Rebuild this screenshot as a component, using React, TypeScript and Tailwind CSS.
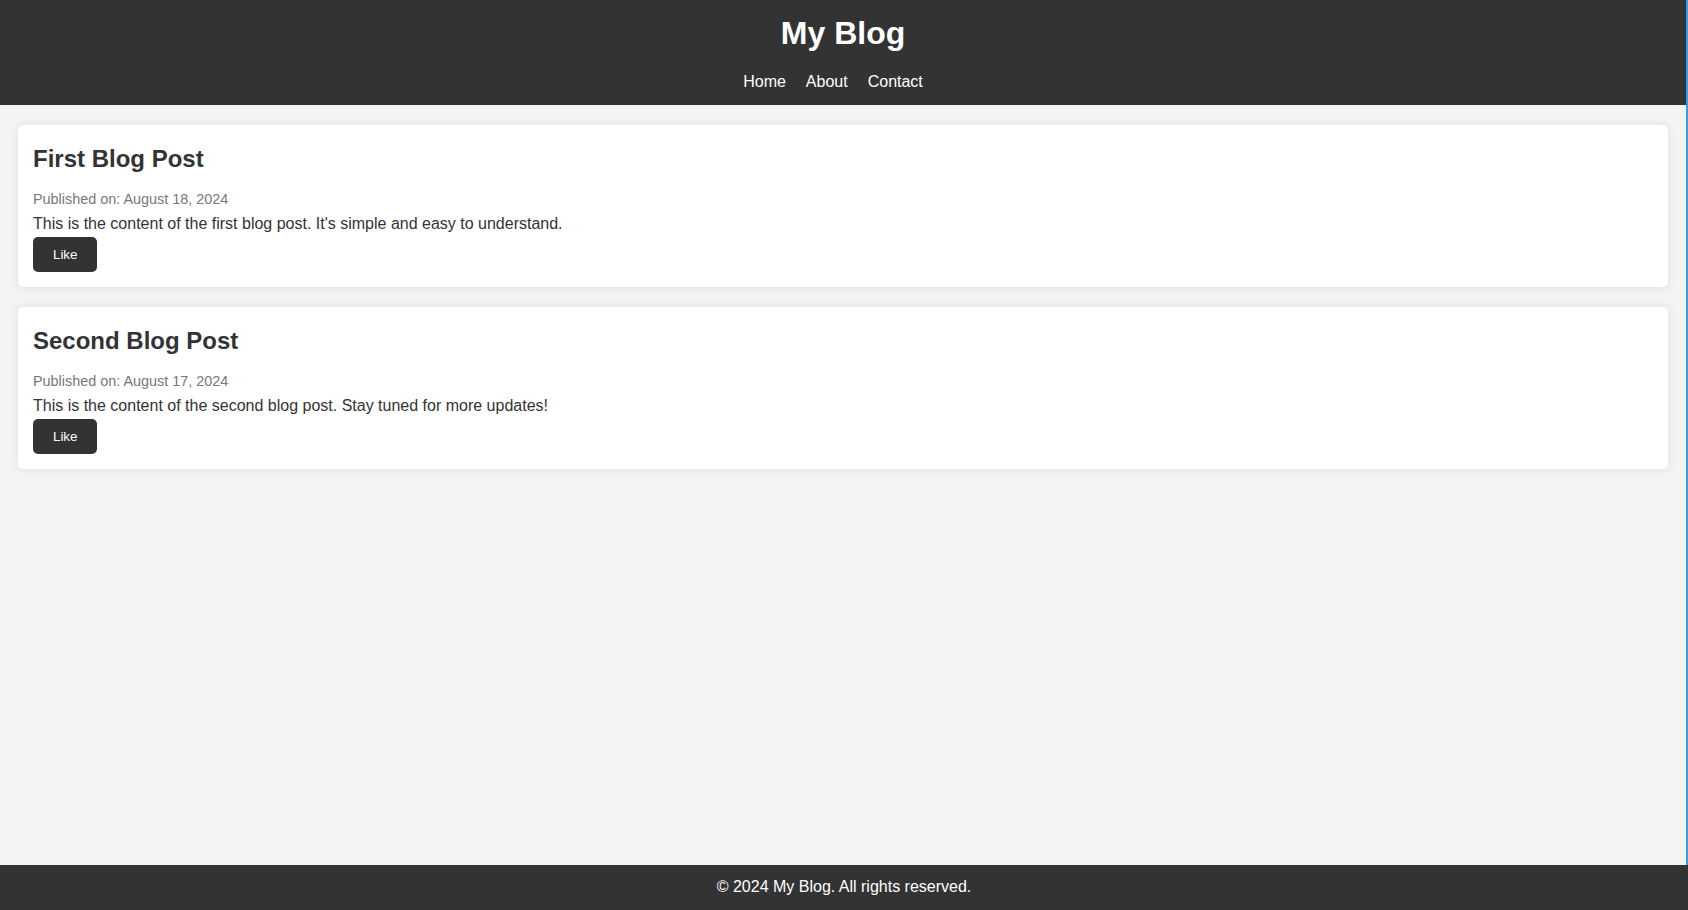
const posts = [
  {
    title: 'First Blog Post',
    date: 'August 18, 2024',
    body: "This is the content of the first blog post. It's simple and easy to understand.",
  },
  {
    title: 'Second Blog Post',
    date: 'August 17, 2024',
    body: 'This is the content of the second blog post. Stay tuned for more updates!',
  },
]

const PostCard = ({ title, date, body }: { title: string; date: string; body: string }) => (
  <article className="bg-white rounded-[5px] shadow-[0_0_10px_rgba(0,0,0,0.1)] p-[15px] mb-[20px]">
    <h2 className="mt-[5px] text-[24px] leading-[28px] font-bold text-[#333]">{title}</h2>
    <p className="mt-[18px] text-[14.4px] leading-[16px] text-[#777]">Published on: {date}</p>
    <p className="mt-[8px] text-[16px] leading-[18px] text-[#333]">{body}</p>
    <button className="mt-[4px] block bg-[#333] text-white text-[13.33px] leading-[15px] px-[20px] py-[10px] rounded-[5px]">
      Like
    </button>
  </article>
)

export default function App() {
  return (
    <div className="min-h-screen flex flex-col bg-[#f4f4f4] font-['Liberation_Sans',Arial,sans-serif]">
      <div className="flex-1 flex flex-col border-r-2 border-[#3c9be8]">
        <header className="bg-[#333] text-white text-center pt-[15px] pb-[14px]">
          <h1 className="text-[32px] leading-[37px] font-bold">My Blog</h1>
          <nav className="mt-[21px] flex justify-center text-[16px] leading-[18px]">
            <a href="#" className="mr-5">Home</a>
            <a href="#" className="mr-5">About</a>
            <a href="#" className="mr-5">Contact</a>
          </nav>
        </header>

        <main className="flex-1 px-[18px] pt-[20px]">
          {posts.map((p) => (
            <PostCard key={p.title} {...p} />
          ))}
        </main>
      </div>

      <footer className="bg-[#333] text-white text-center text-[16px] leading-[19px] pt-[12px] pb-[14px]">
        © 2024 My Blog. All rights reserved.
      </footer>
    </div>
  )
}
